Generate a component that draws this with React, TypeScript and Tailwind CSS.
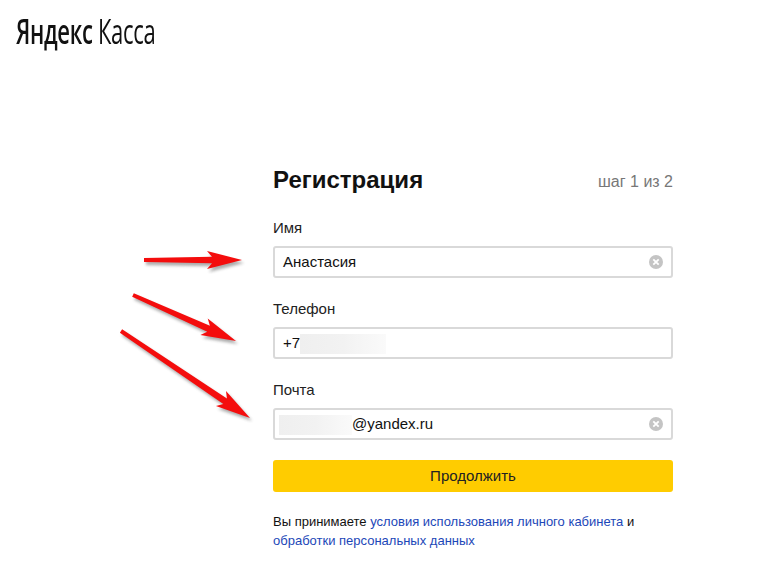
const font = { fontFamily: '"Liberation Sans", Arial, sans-serif' };

function Clear() {
  return (
    <svg width="14" height="14" viewBox="0 0 14 14" className="shrink-0">
      <circle cx="7" cy="7" r="7" fill="#c4c4c4" />
      <path d="M4.3 4.3l5.4 5.4M9.7 4.3l-5.4 5.4" stroke="#fff" strokeWidth="1.8" />
    </svg>
  );
}

function Blur({ w }: { w: string }) {
  return <div className={`${w} h-5 bg-gradient-to-r from-[#efefef] via-[#f2f2f2] to-[#fafafa]`} />;
}

function Field({ label, children, clear }: { label: string; children: React.ReactNode; clear?: boolean }) {
  return (
    <div className="flex flex-col">
      <div className="h-[24px] mb-[6px] flex items-center text-[15px] leading-[24px] text-[#222]">{label}</div>
      <div className="h-[32px] box-border rounded-[3px] border-[2px] border-[#d9d9d9] flex items-center pl-[8px] pr-[8px] text-[15px] text-[#111]">
        <div className="flex-1 flex items-center pt-[1px]">{children}</div>
        {clear && <Clear />}
      </div>
    </div>
  );
}

function Arrows() {
  const arrow = (x1: number, y1: number, x2: number, y2: number) => {
    const a = Math.atan2(y2 - y1, x2 - x1);
    const c = Math.cos(a), s = Math.sin(a);
    const nx = x2 - c * 35, ny = y2 - s * 35;
    const jx = x2 - c * 30, jy = y2 - s * 30;
    const p = (px: number, py: number, o: number) => `${px - s * o},${py + c * o}`;
    const head = `${x2},${y2} ${p(nx, ny, 9)} ${p(jx, jy, 3.2)} ${p(x1, y1, 2)} ${p(x1, y1, -2)} ${p(jx, jy, -3.2)} ${p(nx, ny, -9)}`;
    return (
      <g key={x1}>
        <polygon points={head} fill="#444" opacity="0.45" transform="translate(2 3)" filter="url(#arrowBlur)" />
        <polygon points={head} fill="#f40d0d" />
      </g>
    );
  };
  return (
    <svg width="757" height="562" className="absolute left-0 top-0 pointer-events-none">
      <defs>
        <filter id="arrowBlur"><feGaussianBlur stdDeviation="1.5" /></filter>
      </defs>
      {arrow(144, 260, 242, 260)}
      {arrow(133, 295, 236, 341)}
      {arrow(121, 331, 250, 418)}
    </svg>
  );
}

export default function App() {
  return (
    <div className="relative w-[757px] h-[562px] bg-white overflow-hidden" style={font}>
      <header className="h-[166px] pl-[16px] pt-[10px]">
        <div className="origin-left scale-x-[0.63] whitespace-nowrap text-[35px] leading-[42px] tracking-[-0.5px] text-[#111]" style={{ fontFamily: '"Open Sans", sans-serif' }}>
          <span className="font-semibold">Яндекс</span> <span className="font-normal">Касса</span>
        </div>
      </header>
      <main className="ml-[273px] w-[400px]">
        <div className="flex items-center justify-between h-[28px]">
          <h1 className="text-[24px] font-bold leading-[28px] text-[#111]">Регистрация</h1>
          <span className="text-[16px] pt-[3px] text-[#777]">шаг 1 из 2</span>
        </div>
        <div className="mt-[22px] flex flex-col gap-[19px]">
          <Field label="Имя" clear>Анастасия</Field>
          <Field label="Телефон">
            <span>+7</span>
            <Blur w="w-[86px]" />
          </Field>
          <Field label="Почта" clear>
            <div className="-ml-[4px]"><Blur w="w-[73px]" /></div>
            <span>@yandex.ru</span>
          </Field>
        </div>
        <button className="mt-[20px] w-full h-[32px] rounded-[3px] bg-[#ffcc00] text-[15px] text-[#222]">Продолжить</button>
        <p className="mt-[20px] text-[13px] leading-[19px] text-[#111] whitespace-nowrap">
          Вы принимаете <a className="text-[#1c47b8]">условия использования личного кабинета</a> и<br />
          <a className="text-[#1c47b8]">обработки персональных данных</a>
        </p>
      </main>
      <Arrows />
    </div>
  );
}
